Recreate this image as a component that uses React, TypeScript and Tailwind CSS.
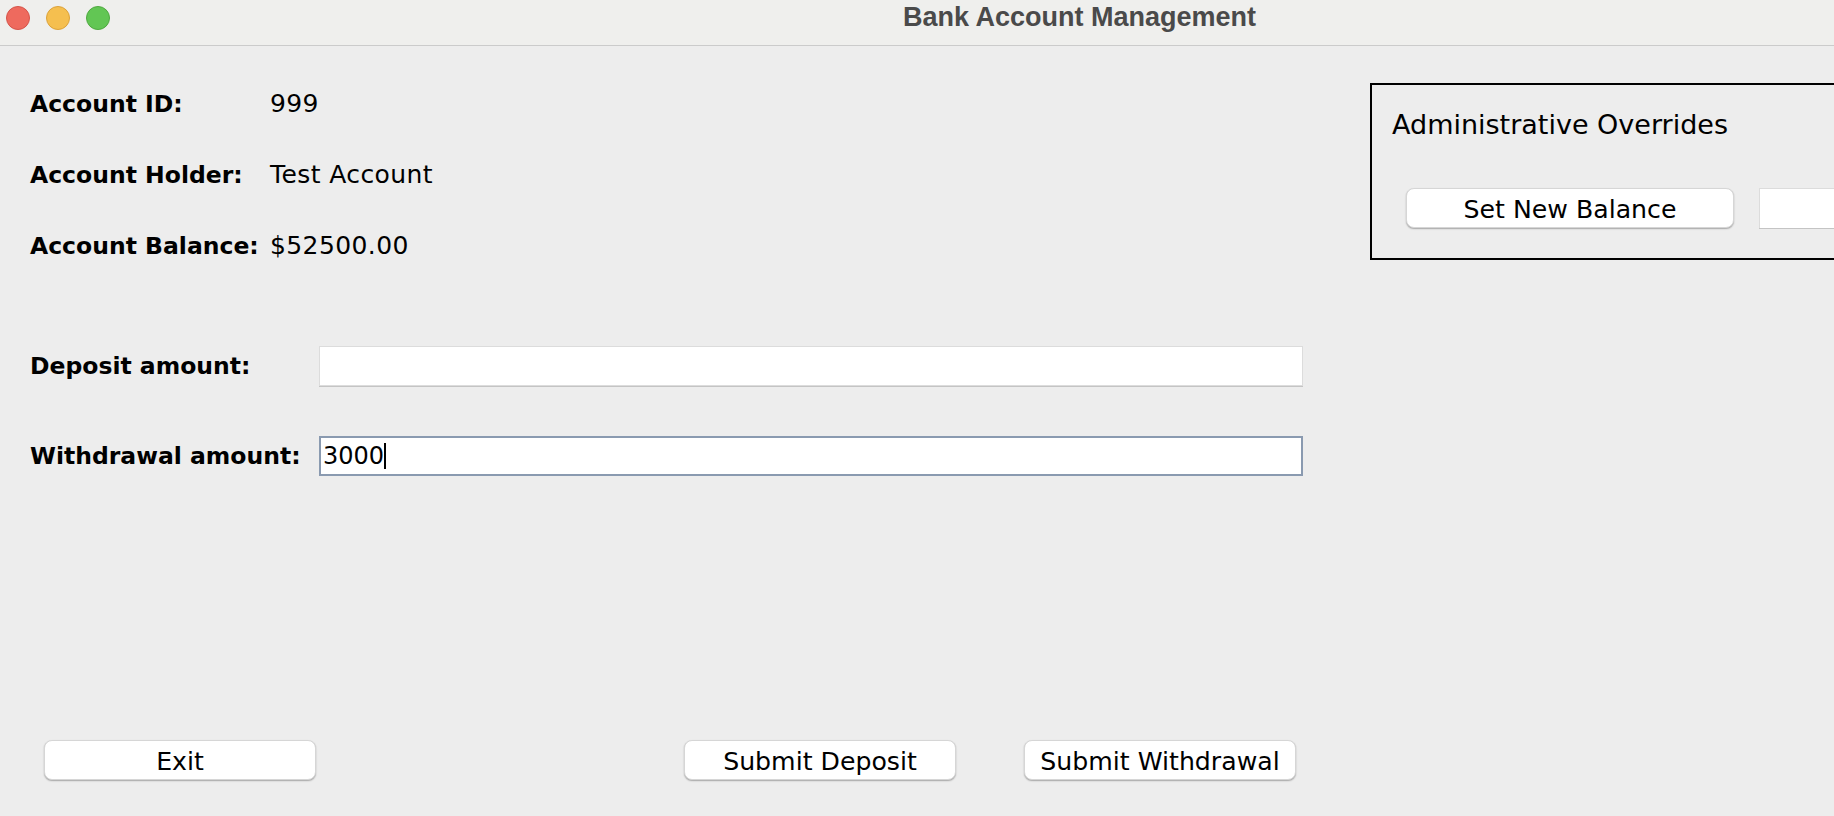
import React from 'react';

const infoRows = [
  { label: 'Account ID:', value: '999' },
  { label: 'Account Holder:', value: 'Test Account' },
  { label: 'Account Balance:', value: '$52500.00' },
];

function MacButton({ children, className = '' }: { children: React.ReactNode; className?: string }) {
  return (
    <div
      className={`h-[40px] shrink-0 bg-white rounded-[8px] border border-[#d6d6d6] shadow-[0_1px_1.5px_rgba(0,0,0,0.3)] flex items-center justify-center pt-[3px] text-[25.2px] leading-none text-black ${className}`}
    >
      {children}
    </div>
  );
}

export default function App() {
  return (
    <div className="w-[1834px] h-[816px] overflow-hidden bg-[#ededed] font-['DejaVu_Sans',sans-serif] text-black">
      {/* title bar */}
      <div className="h-[46px] bg-[#efefed] border-b border-[#cbcbcb] flex items-start">
        <div className="flex gap-[16px] pl-[6px] pt-[6px]">
          <div className="w-[24px] h-[24px] rounded-full bg-[#ee6a5e] border border-[#d5544a]" />
          <div className="w-[24px] h-[24px] rounded-full bg-[#f5bf4f] border border-[#dca23a]" />
          <div className="w-[24px] h-[24px] rounded-full bg-[#62c654] border border-[#4fa940]" />
        </div>
        <div className="ml-[793px] pt-[3px] font-['Liberation_Sans',sans-serif] font-bold text-[27px] leading-[29px] text-[#4a4a4a]">
          Bank Account Management
        </div>
      </div>

      <div className="flex">
        {/* left column */}
        <div className="w-[1303px] shrink-0 pl-[30px] pt-[43px]">
          {infoRows.map((r) => (
            <div key={r.label} className="h-[71px] flex items-baseline">
              <div className="w-[240px] shrink-0 font-bold text-[23.5px] leading-[30px]">{r.label}</div>
              <div className="text-[25px] leading-[30px] tracking-[0.4px]">{r.value}</div>
            </div>
          ))}

          <div className="mt-[44px] h-[40px] flex items-center">
            <div className="w-[289px] shrink-0 font-bold text-[23.5px] leading-[30px]">Deposit amount:</div>
            <div className="w-[984px] h-[40px] bg-white border border-[#dcdcdc] shadow-[0_1px_0_#c4c4c4]" />
          </div>

          <div className="mt-[50px] h-[40px] flex items-center">
            <div className="w-[289px] shrink-0 font-bold text-[23.5px] leading-[30px]">Withdrawal amount:</div>
            <div className="w-[984px] h-[40px] bg-white border-2 border-[#8a9ab0] flex items-center pl-[2px]">
              <span className="text-[24px] leading-none">3000</span>
              <span className="w-[2px] h-[26px] bg-black" />
            </div>
          </div>

          <div className="mt-[264px] flex pl-[14px]">
            <MacButton className="w-[272px]">Exit</MacButton>
            <MacButton className="w-[272px] ml-[368px]">Submit Deposit</MacButton>
            <MacButton className="w-[272px] ml-[68px]">Submit Withdrawal</MacButton>
          </div>
        </div>

        {/* admin panel */}
        <div className="ml-[67px] mt-[37px] w-[600px] h-[177px] shrink-0 border-2 border-black pl-[20px] pt-[24px]">
          <div className="text-[27px] leading-[32px]">Administrative Overrides</div>
          <div className="mt-[47px] flex ml-[14px]">
            <MacButton className="w-[328px]">Set New Balance</MacButton>
            <div className="ml-[25px] w-[300px] h-[40px] shrink-0 bg-white border-l border-t border-[#dcdcdc] shadow-[0_1px_0_#c4c4c4]" />
          </div>
        </div>
      </div>
    </div>
  );
}
